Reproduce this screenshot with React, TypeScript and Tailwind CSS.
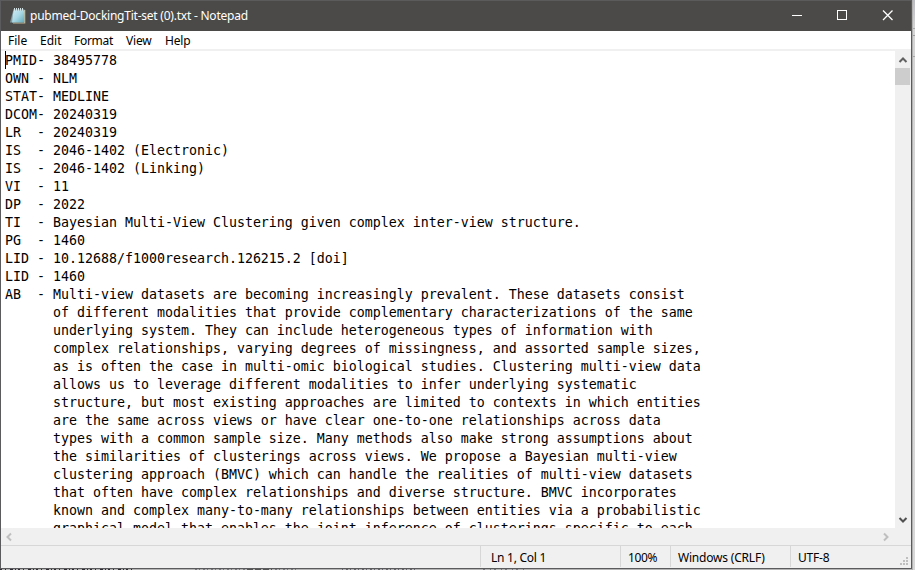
import React from "react";

const record = `PMID- 38495778
OWN - NLM
STAT- MEDLINE
DCOM- 20240319
LR  - 20240319
IS  - 2046-1402 (Electronic)
IS  - 2046-1402 (Linking)
VI  - 11
DP  - 2022
TI  - Bayesian Multi-View Clustering given complex inter-view structure.
PG  - 1460
LID - 10.12688/f1000research.126215.2 [doi]
LID - 1460
AB  - Multi-view datasets are becoming increasingly prevalent. These datasets consist
      of different modalities that provide complementary characterizations of the same
      underlying system. They can include heterogeneous types of information with
      complex relationships, varying degrees of missingness, and assorted sample sizes,
      as is often the case in multi-omic biological studies. Clustering multi-view data
      allows us to leverage different modalities to infer underlying systematic
      structure, but most existing approaches are limited to contexts in which entities
      are the same across views or have clear one-to-one relationships across data
      types with a common sample size. Many methods also make strong assumptions about
      the similarities of clusterings across views. We propose a Bayesian multi-view
      clustering approach (BMVC) which can handle the realities of multi-view datasets
      that often have complex relationships and diverse structure. BMVC incorporates
      known and complex many-to-many relationships between entities via a probabilistic
      graphical model that enables the joint inference of clusterings specific to each`;

function NotepadIcon() {
  return (
    <svg width="16" height="16" viewBox="0 0 16 16" className="shrink-0">
      <defs>
        <linearGradient id="page" x1="0" y1="0" x2="1" y2="1">
          <stop offset="0" stopColor="#d3eef4" />
          <stop offset="0.5" stopColor="#a9d8e4" />
          <stop offset="1" stopColor="#5fa9bb" />
        </linearGradient>
      </defs>
      <path d="M3 3L0 14.5H3Z" fill="#7f9aa0" />
      <path d="M14 2H15.3V15.5H3V14.5H14Z" fill="#c6b795" />
      <path d="M3.5 1.5H14.3V14.5H2Z" fill="url(#page)" />
      <path d="M4.5 0V2.5M6.5 0V2.5M8.5 0V2.5M10.5 0V2.5M12.5 0V2.5" stroke="#d5e2e5" strokeWidth="1" />
      <path d="M3.5 1V2.5M5.5 1V2.5M7.5 1V2.5M9.5 1V2.5M11.5 1V2.5M13.5 1V2.5" stroke="#5f7f88" strokeWidth="0.7" />
    </svg>
  );
}

function Chevron({ d, color }: { d: string; color: string }) {
  return (
    <svg width="10" height="10" viewBox="0 0 10 10" fill="none" stroke={color} strokeWidth="2">
      <path d={d} />
    </svg>
  );
}

function TitleBar() {
  return (
    <div className="flex h-[31px] items-center border-t border-[#5b5b5b] bg-[#4c4a48] pl-[9px] text-white">
      <NotepadIcon />
      <span className="ml-1 text-[12px] whitespace-pre tracking-[-0.23px]">pubmed-DockingTit-set (0).txt - Notepad</span>
      <svg className="ml-auto mr-[16px]" width="103" height="12" viewBox="0 0 103 12" fill="none" stroke="white">
        <path d="M0 5.5H10" />
        <rect x="45.5" y="0.5" width="9" height="9" />
        <path d="M91 0.5L100.5 10M100.5 0.5L91 10" strokeWidth="1.3" />
      </svg>
    </div>
  );
}

function MenuBar() {
  return (
    <div className="flex h-5 items-center border-b-2 border-[#f0f0f0] bg-white pt-[2px] pl-[7px] text-[12px]">
      <span className="w-8">File</span>
      <span className="w-[34px]">Edit</span>
      <span className="w-[52px] tracking-[-0.3px]">Format</span>
      <span className="w-[39px] tracking-[-0.2px]">View</span>
      <span className="tracking-[-0.2px]">Help</span>
    </div>
  );
}

function StatusBar() {
  return (
    <div className="flex h-[23px] border-t border-[#d7d7d7] bg-[#f0f0f0] text-[12px] leading-[23px]">
      <div className="w-[479px]" />
      <div className="mb-px w-[140px] border-l border-[#d7d7d7] pl-[10px] tracking-[-0.25px]">Ln 1, Col 1</div>
      <div className="mb-px w-[50px] border-l border-[#d7d7d7] pl-[7px] tracking-[-0.4px]">100%</div>
      <div className="mb-px w-[120px] border-l border-[#d7d7d7] pl-[7px] tracking-[-0.2px]">Windows (CRLF)</div>
      <div className="mb-px flex-1 border-l border-[#d7d7d7] pl-[7px] tracking-[-0.2px]">UTF-8</div>
      <svg className="mr-[2px] mb-[2px] self-end" width="9" height="9" fill="#bfbfbf">
        <path d="M6 0h2v2h-2zM3 3h2v2h-2zM6 3h2v2h-2zM0 6h2v2h-2zM3 6h2v2h-2zM6 6h2v2h-2z" />
      </svg>
    </div>
  );
}

function BackgroundSliver() {
  return (
    <svg className="block" width="912" height="1" fill="none">
      <path d="M0 0.5H136" stroke="#302c34" strokeDasharray="2 3 1 4 3 2 1 2" />
      <path d="M195 0.5H298" stroke="#77777b" strokeDasharray="2 2 1 3" />
      <path d="M247 0.5H272" stroke="#555" strokeDasharray="6 2" />
      <path d="M342 0.5H418" stroke="#66666a" strokeDasharray="1 3 2 2" />
      <path d="M483 0.5H525" stroke="#77777b" strokeDasharray="2 5 1 3" />
    </svg>
  );
}

export default function App() {
  return (
    <div className="h-[570px] w-[915px] overflow-hidden bg-[#b5b5b5] font-['Noto_Sans',sans-serif] text-black">
      <div className="flex">
        <div className="flex flex-col">
          <div className="flex h-[569px] w-[912px] flex-col border-r border-b border-l border-[#5b5a5c] bg-[#f0f0f0]">
            <TitleBar />
            <MenuBar />
            <div className="flex h-[477px]">
              <div className="relative w-[894px] overflow-hidden bg-white pt-px pl-1">
                <pre className="font-['DejaVu_Sans_Mono',monospace] text-[13.29px] leading-[18px]">{record}</pre>
                <div className="absolute top-0 left-1 h-[18px] w-px bg-black" />
              </div>
              <div className="flex w-4 flex-col items-center bg-[#f0f0f0]">
                <div className="flex h-[17px] items-center"><Chevron d="M1.5 7L5 3.5L8.5 7" color="#606060" /></div>
                <div className="h-[17px] w-[15px] self-start bg-[#cdcdcd]" />
                <div className="mt-auto flex h-[17px] items-center"><Chevron d="M1.5 3L5 6.5L8.5 3" color="#505050" /></div>
              </div>
            </div>
            <div className="flex h-[17px] items-center justify-between bg-[#f0f0f0] pr-[20px] pl-[3px]">
              <Chevron d="M7 1.5L3.5 5L7 8.5" color="#bfbfbf" />
              <Chevron d="M3 1.5L6.5 5L3 8.5" color="#bfbfbf" />
            </div>
            <StatusBar />
          </div>
          <BackgroundSliver />
        </div>
        <div className="flex h-[570px] w-[3px] flex-col border-l border-[#b0b0b0] bg-linear-to-b from-[#bcbcc4] via-[#d5d5d5] via-5% to-[#d8d8d8]">
          <div className="mt-[28px] h-px bg-[#a9a9a9]" />
          <div className="mt-[6px] h-px bg-[#a0a0a0]" />
          <div className="mt-[20px] h-px bg-[#a9a9a9]" />
        </div>
      </div>
    </div>
  );
}
